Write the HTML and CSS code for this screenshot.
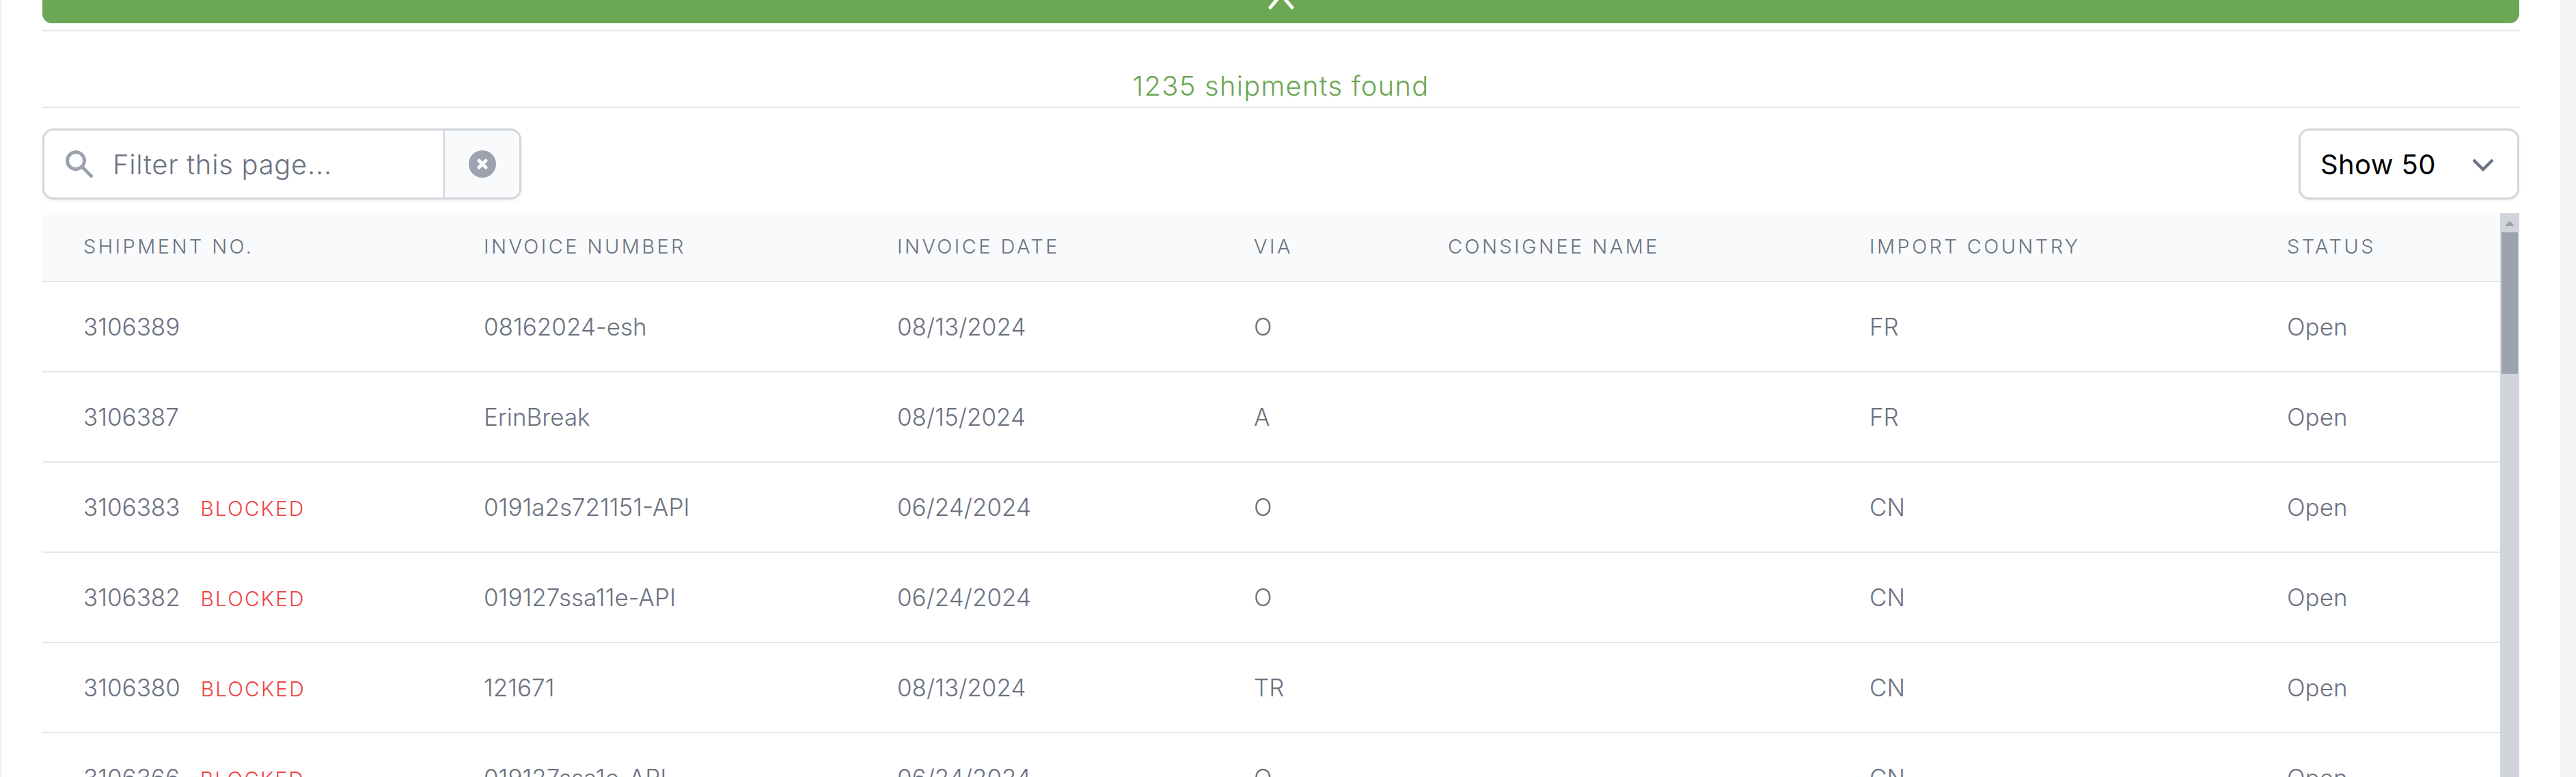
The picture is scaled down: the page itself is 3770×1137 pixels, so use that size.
FILE: index.html
```html
<!DOCTYPE html>
<html lang="en">

<head>
    <meta charset="UTF-8">
    <meta name="viewport" content="width=device-width, initial-scale=1.0">
    <title>Shipments</title>
    <link rel="stylesheet" href="styles.css">
</head>

<body>
    <div class="panel">
        <div class="collapse-bar">
            <svg class="collapse-icon" viewBox="0 0 40 14"><path d="M4 11 20 -8 36 11"/></svg>
        </div>

        <div class="count">1235 shipments found</div>

        <div class="controls">
            <div class="filter">
                <div class="filter-input">
                    <svg class="search-icon" viewBox="0 0 20 20"><path fill-rule="evenodd" clip-rule="evenodd" d="M8 4a4 4 0 100 8 4 4 0 000-8zM2 8a6 6 0 1110.89 3.476l4.817 4.817a1 1 0 01-1.414 1.414l-4.816-4.816A6 6 0 012 8z"/></svg>
                    <span class="placeholder">Filter this page...</span>
                </div>
                <div class="filter-clear">
                    <svg class="clear-icon" viewBox="0 0 20 20"><path fill-rule="evenodd" clip-rule="evenodd" d="M10 18a8 8 0 100-16 8 8 0 000 16zM8.707 7.293a1 1 0 00-1.414 1.414L8.586 10l-1.293 1.293a1 1 0 101.414 1.414L10 11.414l1.293 1.293a1 1 0 001.414-1.414L11.414 10l1.293-1.293a1 1 0 00-1.414-1.414L10 8.586 8.707 7.293z"/></svg>
                </div>
            </div>
            <div class="page-size">
                <span>Show 50</span>
                <svg class="chevron" viewBox="0 0 24 24"><path d="M19 9l-7 7-7-7"/></svg>
            </div>
        </div>

        <div class="table-wrap">
            <table class="shipments">
                <colgroup>
                    <col class="c-ship">
                    <col class="c-inv">
                    <col class="c-date">
                    <col class="c-via">
                    <col class="c-name">
                    <col class="c-country">
                    <col class="c-status">
                </colgroup>
                <thead>
                    <tr>
                        <th>Shipment No.</th>
                        <th>Invoice Number</th>
                        <th>Invoice Date</th>
                        <th>Via</th>
                        <th>Consignee Name</th>
                        <th>Import Country</th>
                        <th>Status</th>
                    </tr>
                </thead>
                <tbody>
                    <tr>
                        <td>3106389</td>
                        <td>08162024-esh</td>
                        <td>08/13/2024</td>
                        <td>O</td>
                        <td></td>
                        <td>FR</td>
                        <td>Open</td>
                    </tr>
                    <tr>
                        <td>3106387</td>
                        <td>ErinBreak</td>
                        <td>08/15/2024</td>
                        <td>A</td>
                        <td></td>
                        <td>FR</td>
                        <td>Open</td>
                    </tr>
                    <tr>
                        <td>3106383 <span class="blocked">Blocked</span></td>
                        <td>0191a2s721151-API</td>
                        <td>06/24/2024</td>
                        <td>O</td>
                        <td></td>
                        <td>CN</td>
                        <td>Open</td>
                    </tr>
                    <tr>
                        <td>3106382 <span class="blocked">Blocked</span></td>
                        <td>019127ssa11e-API</td>
                        <td>06/24/2024</td>
                        <td>O</td>
                        <td></td>
                        <td>CN</td>
                        <td>Open</td>
                    </tr>
                    <tr>
                        <td>3106380 <span class="blocked">Blocked</span></td>
                        <td>121671</td>
                        <td>08/13/2024</td>
                        <td>TR</td>
                        <td></td>
                        <td>CN</td>
                        <td>Open</td>
                    </tr>
                    <tr>
                        <td>3106366 <span class="blocked">Blocked</span></td>
                        <td>019127ssa1e-API</td>
                        <td>06/24/2024</td>
                        <td>O</td>
                        <td></td>
                        <td>CN</td>
                        <td>Open</td>
                    </tr>
                </tbody>
            </table>
            <div class="scrollbar">
                <div class="scroll-up"></div>
                <div class="scroll-thumb"></div>
            </div>
        </div>
    </div>
</body>

</html>
```

FILE: styles.css
```css
html, body {
    margin: 0;
    height: 100%;
    overflow: hidden;
}

body {
    background-color: #f3f4f6;
    font-family: Inter, "Liberation Sans", sans-serif;
    font-weight: 300;
    color: #6b7280;
}

.panel {
    height: 100%;
    margin: 0 23px 0 3px;
    padding: 0 60px 0 59px;
    background-color: #fff;
    box-sizing: border-box;
}

.collapse-bar {
    height: 34px;
    display: flex;
    justify-content: center;
    background-color: #6ca755;
    border-radius: 0 0 14px 14px;
    overflow: hidden;
}

.collapse-icon {
    width: 40px;
    height: 14px;
}

.collapse-icon path {
    fill: none;
    stroke: #fff;
    stroke-width: 5;
    stroke-linecap: round;
}

.count {
    height: 114px;
    margin-top: 10px;
    display: flex;
    align-items: flex-end;
    justify-content: center;
    padding-bottom: 6px;
    box-sizing: border-box;
    border-top: 2px solid #e5e7eb;
    border-bottom: 2px solid #e5e7eb;
    font-size: 40px;
    letter-spacing: 1.2px;
    color: #6ca755;
}

.controls {
    display: flex;
    justify-content: space-between;
    margin-top: 30px;
}

.filter {
    width: 701px;
    height: 104px;
    display: flex;
    box-sizing: border-box;
    border: 3px solid #d1d5db;
    border-radius: 16px;
    box-shadow: 0 3px 5px rgba(0, 0, 0, 0.05);
    overflow: hidden;
}

.filter-input {
    width: 586px;
    display: flex;
    align-items: center;
    padding-left: 26px;
    box-sizing: border-box;
    border-right: 2px solid #d1d5db;
}

.search-icon {
    width: 50px;
    height: 50px;
    fill: #9ca3af;
}

.placeholder {
    margin-left: 24px;
    font-size: 40px;
    letter-spacing: 0.7px;
}

.filter-clear {
    flex: 1;
    display: flex;
    align-items: center;
    justify-content: center;
    background-color: #f9fafb;
}

.clear-icon {
    width: 50px;
    height: 50px;
    fill: #9ca3af;
}

.page-size {
    width: 323px;
    height: 104px;
    display: flex;
    align-items: center;
    justify-content: space-between;
    padding: 0 26px 0 29px;
    box-sizing: border-box;
    border: 3px solid #d1d5db;
    border-radius: 16px;
    box-shadow: 0 2px 4px rgba(0, 0, 0, 0.05);
    font-size: 40px;
    font-weight: 400;
    letter-spacing: 0.4px;
    color: #000;
}

.chevron {
    width: 48px;
    height: 48px;
    fill: none;
    stroke: #6b7280;
    stroke-width: 2.2;
}

.table-wrap {
    display: flex;
    align-items: flex-start;
    margin-top: 18px;
}

.shipments {
    width: 3597px;
    table-layout: fixed;
    border-collapse: separate;
    border-spacing: 0;
}

.c-ship { width: 586px; }
.c-inv { width: 605px; }
.c-date { width: 522px; }
.c-via { width: 284px; }
.c-name { width: 617px; }
.c-country { width: 611px; }
.c-status { width: 372px; }

.shipments th {
    height: 103px;
    padding: 0 0 0 60px;
    box-sizing: border-box;
    background-color: #f9fafb;
    border-bottom: 2px solid #e5e7eb;
    text-align: left;
    font-size: 29px;
    font-weight: 300;
    text-transform: uppercase;
    letter-spacing: 3.4px;
}

.shipments th:first-child {
    border-top-left-radius: 14px;
}

.shipments td {
    height: 132px;
    padding: 0 0 0 60px;
    box-sizing: border-box;
    border-bottom: 2px solid #e5e7eb;
    font-size: 35px;
    white-space: nowrap;
}

.blocked {
    margin-left: 20px;
    font-size: 30px;
    letter-spacing: 2px;
    text-transform: uppercase;
    color: #ef4444;
}

.scrollbar {
    width: 28px;
    height: 830px;
    margin-top: 2px;
    flex-shrink: 0;
    background-color: #d1d5db;
}

.scroll-up {
    width: 0;
    height: 0;
    margin: 0 auto;
    border: 7px solid transparent;
    border-top-width: 0;
    border-bottom: 8px solid #9ca3af;
    transform: translateY(11px);
}

.scroll-thumb {
    width: 24px;
    height: 207px;
    margin: 20px 2px 0;
    background-color: #9ca3af;
}
```
